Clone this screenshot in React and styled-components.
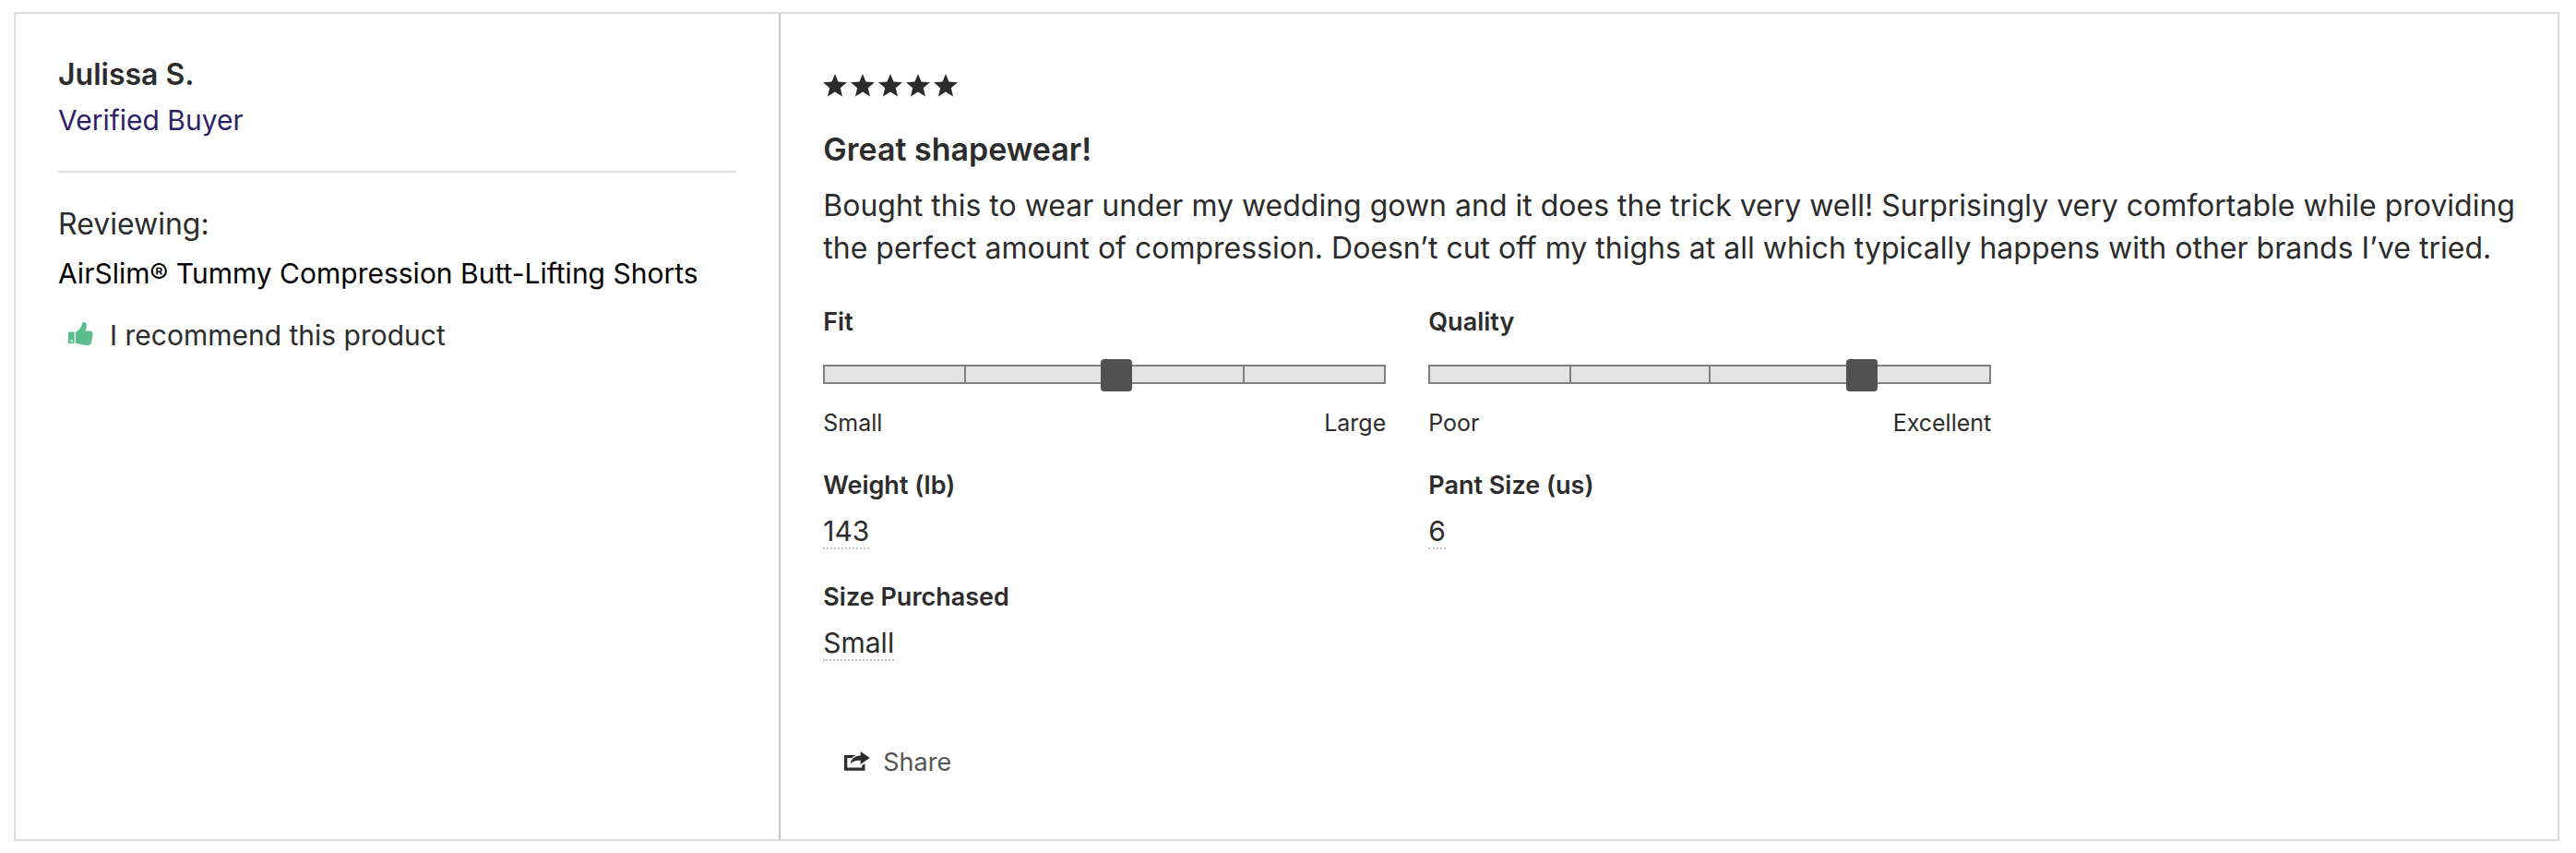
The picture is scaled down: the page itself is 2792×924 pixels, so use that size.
import React from "react";
import styled, { createGlobalStyle } from "styled-components";

const GlobalStyle = createGlobalStyle`
  *, *::before, *::after { box-sizing: border-box; }
  body {
    margin: 0;
    background: #fefefe;
    color: #2c2c2c;
    font-family: Inter, "Liberation Sans", sans-serif;
  }
`;

const Page = styled.main`
  padding: 13px 18px 13px 15px;
`;

const Card = styled.article`
  display: flex;
  border: 2px solid #dcdcdc;
`;

const Reviewer = styled.aside`
  flex: 0 0 30.1%;
  padding: 46px;
  border-right: 2px solid #cacaca;
`;

const Name = styled.h2`
  margin: 0 0 11px;
  font-size: 32px;
  line-height: 40px;
  font-weight: 600;
`;

const Badge = styled.p`
  margin: 0 0 37px;
  font-size: 30px;
  line-height: 36px;
  color: #2c1f66;
`;

const Divider = styled.hr`
  margin: 0 0 36px;
  border: 0;
  border-top: 2px solid #dfdfdf;
`;

const Reviewing = styled.p`
  margin: 0 0 15px;
  font-size: 32px;
  line-height: 40px;
`;

const ProductLink = styled.a`
  display: block;
  font-size: 30px;
  line-height: 36px;
  color: #000;
  text-decoration: none;
`;

const Recommend = styled.p`
  display: flex;
  align-items: center;
  gap: 18px;
  margin: 31px 0 0;
  padding-left: 10px;
  font-size: 30px;
  line-height: 36px;
`;

const ThumbIcon = styled.svg`
  flex: none;
  width: 28px;
  height: 28px;
`;

const Review = styled.section`
  flex: 1;
  min-width: 0;
  padding: 65px 36px 65px 46px;
`;

const Stars = styled.div`
  display: flex;
  gap: 4px;
`;

const StarIcon = styled.svg`
  width: 26px;
  height: 25px;
  fill: #2c2c2c;
`;

const Title = styled.h3`
  margin: 37px 0 18px;
  font-size: 34px;
  line-height: 40px;
  font-weight: 600;
`;

const Body = styled.p`
  margin: 0;
  font-size: 32px;
  line-height: 46px;
`;

const Fields = styled.div`
  display: grid;
  grid-template-columns: repeat(2, minmax(0, 610px));
  gap: 36px 46px;
  margin-top: 41px;
`;

const FieldLabel = styled.label`
  display: block;
  font-size: 27px;
  line-height: 32px;
  font-weight: 600;
`;

const Scale = styled.input`
  display: block;
  appearance: none;
  width: 100%;
  height: 21px;
  margin: 30px 0 26px;
  background: none;
  pointer-events: none;

  &::-webkit-slider-runnable-track {
    height: 21px;
    border: 2px solid #808080;
    background:
      linear-gradient(#808080, #808080) 25% 0 / 2px 100% no-repeat,
      linear-gradient(#808080, #808080) 50% 0 / 2px 100% no-repeat,
      linear-gradient(#808080, #808080) 75% 0 / 2px 100% no-repeat,
      #e3e3e3;
  }

  &::-webkit-slider-thumb {
    appearance: none;
    width: 34px;
    height: 35px;
    margin-top: -8px;
    border-radius: 4px;
    background: #515151;
  }
`;

const ScaleEnds = styled.div`
  display: flex;
  justify-content: space-between;
  font-size: 25px;
  line-height: 32px;
`;

const FieldValue = styled.output`
  display: block;
  width: fit-content;
  margin-top: 15px;
  border-bottom: 2px dotted #c4c4c4;
  font-size: 30px;
  line-height: 36px;
`;

const ShareButton = styled.button`
  display: flex;
  align-items: center;
  gap: 14px;
  margin: 92px 0 0 23px;
  padding: 0;
  border: 0;
  background: none;
  color: #555;
  font: inherit;
  font-size: 27px;
  line-height: 36px;
  cursor: pointer;
`;

const ShareIcon = styled.svg`
  width: 28px;
  height: 24px;
  fill: #2c2c2c;
`;

function Star() {
  return (
    <StarIcon viewBox="0 0 26 25" aria-hidden="true">
      <path d="M13 0 16.500 8.600 26 9.300 18.800 15.300 21 24.600 13 19.600 5 24.600 7.200 15.300 0 9.300 9.500 8.600Z" />
    </StarIcon>
  );
}

function ScaleField({ id, label, low, high, value }) {
  return (
    <div>
      <FieldLabel htmlFor={id}>{label}</FieldLabel>
      <Scale id={id} type="range" min="0" max="100" step="any" value={value} readOnly />
      <ScaleEnds>
        <span>{low}</span>
        <span>{high}</span>
      </ScaleEnds>
    </div>
  );
}

function ValueField({ id, label, value }) {
  return (
    <div>
      <FieldLabel htmlFor={id}>{label}</FieldLabel>
      <FieldValue id={id}>{value}</FieldValue>
    </div>
  );
}

export default function App() {
  return (
    <Page>
      <GlobalStyle />
      <Card>
        <Reviewer>
          <Name>Julissa S.</Name>
          <Badge>Verified Buyer</Badge>
          <Divider />
          <Reviewing>Reviewing:</Reviewing>
          <ProductLink href="#product">AirSlim® Tummy Compression Butt-Lifting Shorts</ProductLink>
          <Recommend>
            <ThumbIcon viewBox="0 2 28 28" aria-hidden="true">
              <path
                fill="#5bbd8b"
                fillRule="evenodd"
                d="M2 12.500H7.600V25H2Q1 25 1 24V13.500Q1 12.500 2 12.500ZM3.500 22.300A1.200 1.200 0 1 0 5.900 22.300A1.200 1.200 0 1 0 3.500 22.300ZM9 12.500C12 11.500 15 8 16 3.800C16.300 2 17.500 1.500 18.700 1.900C20.700 2.600 21.300 5 20.500 8L19.700 11.500H25Q28 12 27.600 15L26 24Q25.400 27 22 27C17 26.800 13 26 9 24.500Z"
              />
            </ThumbIcon>
            I recommend this product
          </Recommend>
        </Reviewer>
        <Review>
          <Stars role="img" aria-label="5 out of 5 stars">
            {[1, 2, 3, 4, 5].map((n) => (
              <Star key={n} />
            ))}
          </Stars>
          <Title>Great shapewear!</Title>
          <Body>
            Bought this to wear under my wedding gown and it does the trick very well! Surprisingly very
            comfortable while providing the perfect amount of compression. Doesn’t cut off my thighs at all
            which typically happens with other brands I’ve tried.
          </Body>
          <Fields>
            <ScaleField id="fit" label="Fit" low="Small" high="Large" value={52.3} />
            <ScaleField id="quality" label="Quality" low="Poor" high="Excellent" value={78.8} />
            <ValueField id="weight" label="Weight (lb)" value="143" />
            <ValueField id="pant-size" label="Pant Size (us)" value="6" />
            <ValueField id="size" label="Size Purchased" value="Small" />
          </Fields>
          <ShareButton type="button">
            <ShareIcon viewBox="0 0 28 24" aria-hidden="true">
              <path d="M0 4H12.500Q10 5.200 8.500 7H3.300V17.500H19.300V15L22.500 13.500V20.800H0ZM17.700 0 27.700 7 17.700 14V9.800C13 9.200 9.500 10.200 6.700 13.500C7.500 8 11.500 4.800 17.700 4.500Z" />
            </ShareIcon>
            Share
          </ShareButton>
        </Review>
      </Card>
    </Page>
  );
}
